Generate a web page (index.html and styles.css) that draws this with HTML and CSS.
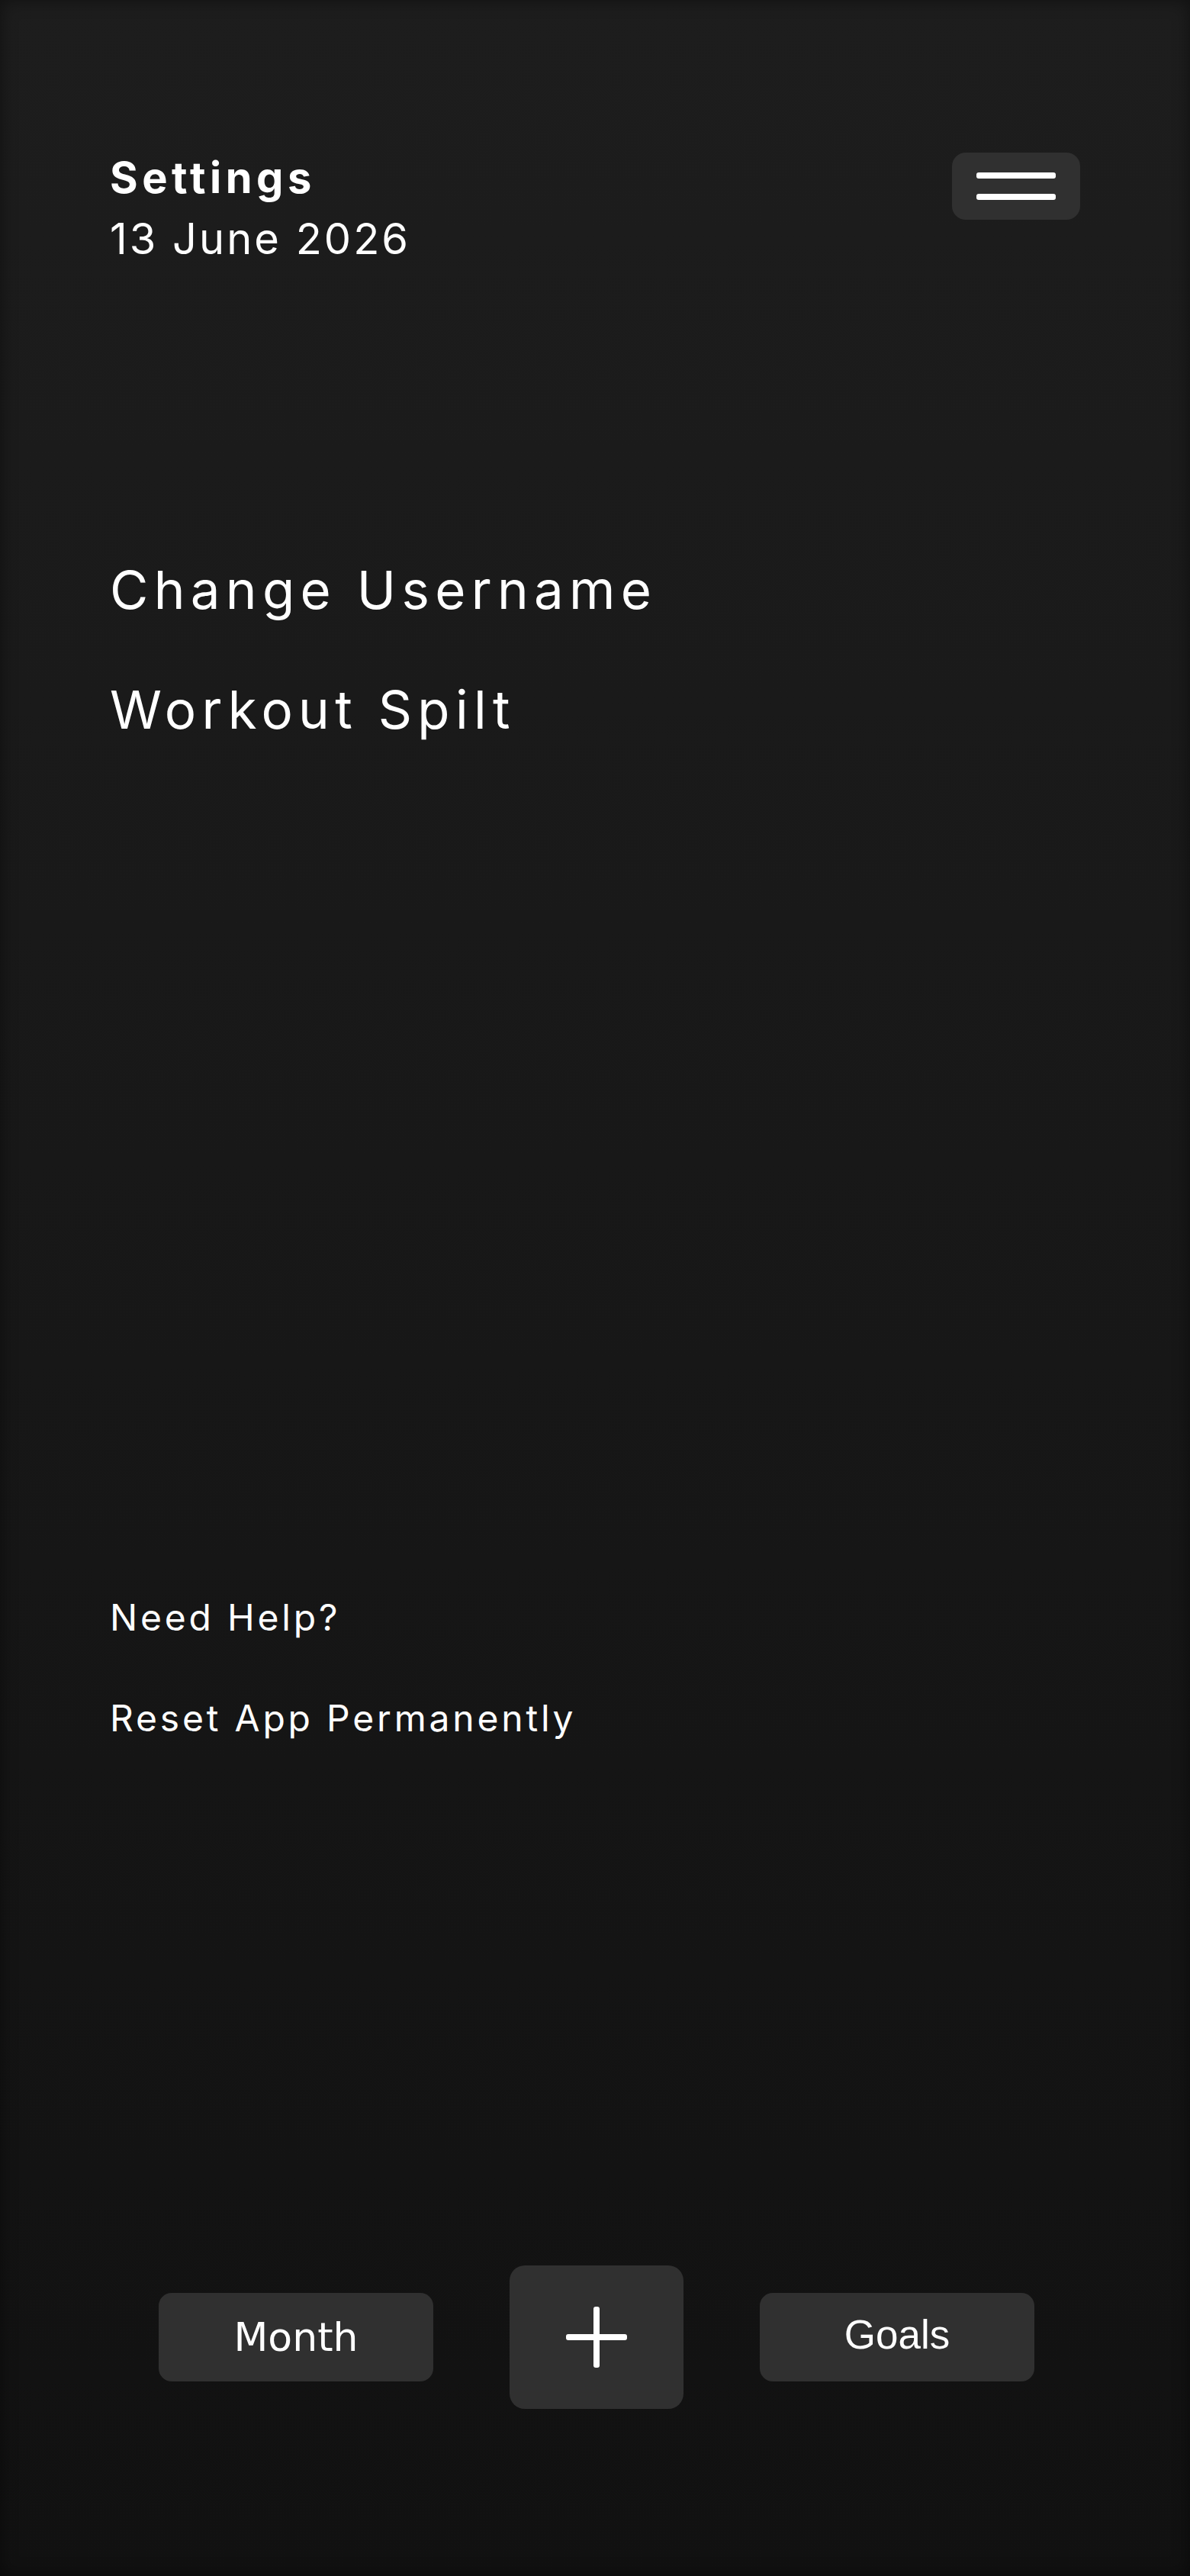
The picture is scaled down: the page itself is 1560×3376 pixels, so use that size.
FILE: index.html
```html
<!DOCTYPE html>
<html lang="en">
<head>
<meta charset="utf-8">
<title>Settings</title>
<link rel="stylesheet" href="styles.css">
</head>
<body>
<div class="page">
  <header class="header">
    <div class="title-block">
      <div class="title">Settings</div>
      <div class="date">13 June 2026</div>
    </div>
    <button class="menu-btn" aria-label="Menu">
      <span class="bar"></span>
      <span class="bar"></span>
    </button>
  </header>

  <nav class="options">
    <div class="option">Change Username</div>
    <div class="option">Workout Spilt</div>
  </nav>

  <section class="help">
    <div class="help-item">Need Help?</div>
    <div class="help-item">Reset App Permanently</div>
  </section>

  <footer class="tabbar">
    <button class="tab tab-month">Month</button>
    <button class="tab-add" aria-label="Add">
      <svg width="80" height="80" viewBox="0 0 80 80">
        <rect x="36" y="0" width="8" height="80" rx="3" fill="#fff"/>
        <rect x="0" y="36" width="80" height="8" rx="3" fill="#fff"/>
      </svg>
    </button>
    <button class="tab tab-goals">Goals</button>
  </footer>
</div>
</body>
</html>
```

FILE: styles.css
```css
* { box-sizing: border-box; }

html, body {
  margin: 0;
  padding: 0;
}

body {
  background: #111111;
  color: #ffffff;
  font-family: Inter, "Liberation Sans", sans-serif;
}

.page {
  width: 1560px;
  height: 3376px;
  display: flex;
  flex-direction: column;
  padding: 193px 144px 0 144px;
  background: linear-gradient(180deg, #1d1d1d 0%, #181818 45%, #111111 100%);
  box-shadow: inset 0 0 22px rgba(0, 0, 0, 0.45);
}

.header {
  display: flex;
  justify-content: space-between;
  align-items: flex-start;
}

.title-block {
  display: flex;
  flex-direction: column;
}

.title {
  font-size: 56px;
  line-height: 80px;
  font-weight: 700;
  letter-spacing: 5.5px;
}

.date {
  font-size: 56px;
  line-height: 80px;
  font-weight: 400;
  letter-spacing: 3px;
}

.menu-btn {
  margin-top: 7px;
  width: 168px;
  height: 88px;
  border: none;
  border-radius: 18px;
  background: #303030;
  display: flex;
  flex-direction: column;
  align-items: center;
  justify-content: center;
  gap: 20px;
  padding: 0;
}

.bar {
  display: block;
  width: 104px;
  height: 8px;
  border-radius: 3px;
  background: #ffffff;
}

.options {
  margin-top: 379px;
  display: flex;
  flex-direction: column;
  gap: 74px;
}

.option {
  font-size: 69px;
  line-height: 83px;
  letter-spacing: 7.3px;
}

.help {
  margin-top: 1119px;
  display: flex;
  flex-direction: column;
  gap: 74px;
}

.help-item {
  font-size: 48px;
  line-height: 58px;
  letter-spacing: 3.8px;
}

.tabbar {
  margin-top: 688px;
  display: flex;
  justify-content: center;
  align-items: center;
  gap: 100px;
  padding-left: 4px;
}

.tab {
  width: 360px;
  height: 116px;
  border: none;
  border-radius: 17px;
  background: #303030;
  color: #ffffff;
  padding: 0;
  display: flex;
  align-items: center;
  justify-content: center;
}

.tab-month {
  font-family: "DejaVu Sans", sans-serif;
  font-size: 52px;
}

.tab-goals {
  font-family: "Liberation Sans", Arial, sans-serif;
  font-size: 53px;
  padding-bottom: 8px;
}

.tab-add {
  width: 228px;
  height: 188px;
  border: none;
  border-radius: 20px;
  background: #303030;
  padding: 0;
  display: flex;
  align-items: center;
  justify-content: center;
}
```
